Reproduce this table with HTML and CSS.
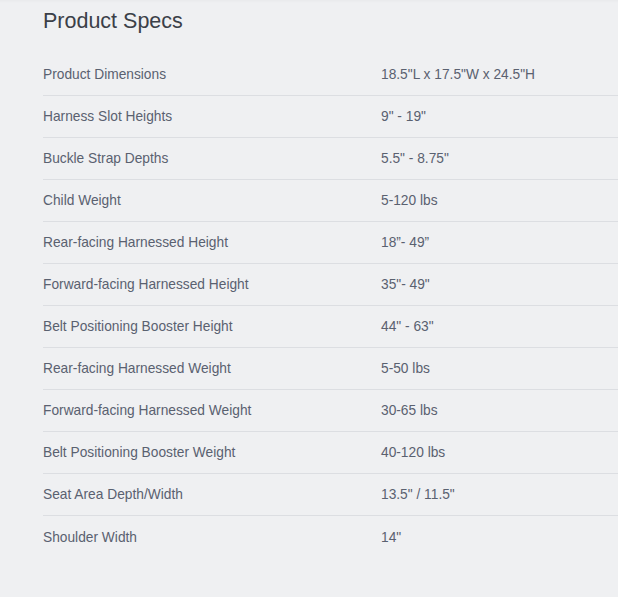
FILE: index.html
```html
<!DOCTYPE html>
<html lang="en">
<head>
<meta charset="utf-8">
<title>Product Specs</title>
<link rel="stylesheet" href="styles.css">
</head>
<body>
<section class="specs">
  <h2 class="specs-title">Product Specs</h2>
  <div class="specs-table">
    <div class="row"><div class="label">Product Dimensions</div><div class="value">18.5"L x 17.5"W x 24.5"H</div></div>
    <div class="row"><div class="label">Harness Slot Heights</div><div class="value">9" - 19"</div></div>
    <div class="row"><div class="label">Buckle Strap Depths</div><div class="value">5.5" - 8.75"</div></div>
    <div class="row"><div class="label">Child Weight</div><div class="value">5-120 lbs</div></div>
    <div class="row"><div class="label">Rear-facing Harnessed Height</div><div class="value">18”- 49”</div></div>
    <div class="row"><div class="label">Forward-facing Harnessed Height</div><div class="value">35"- 49"</div></div>
    <div class="row"><div class="label">Belt Positioning Booster Height</div><div class="value">44" - 63"</div></div>
    <div class="row"><div class="label">Rear-facing Harnessed Weight</div><div class="value">5-50 lbs</div></div>
    <div class="row"><div class="label">Forward-facing Harnessed Weight</div><div class="value">30-65 lbs</div></div>
    <div class="row"><div class="label">Belt Positioning Booster Weight</div><div class="value">40-120 lbs</div></div>
    <div class="row"><div class="label">Seat Area Depth/Width</div><div class="value">13.5" / 11.5"</div></div>
    <div class="row"><div class="label">Shoulder Width</div><div class="value">14"</div></div>
  </div>
</section>
</body>
</html>
```

FILE: styles.css
```css
html, body {
  margin: 0;
  padding: 0;
  background: #eff0f2;
  overflow: hidden;
}
body {
  font-family: "Liberation Sans", Arial, sans-serif;
  box-shadow: inset 0 3px 3px -2px rgba(0, 0, 0, 0.035);
  min-height: 597px;
}
.specs {
  padding: 7px 0 0 43px;
}
.specs-title {
  margin: 0;
  font-size: 21.5px;
  line-height: 28px;
  font-weight: 400;
  color: #3b4048;
}
.specs-table {
  margin-top: 19px;
}
.row {
  display: grid;
  grid-template-columns: 338px 1fr;
  box-sizing: border-box;
  height: 42px;
  align-items: center;
  border-bottom: 1px solid #dcdee2;
  font-size: 13.75px;
  color: #5a6170;
}
.row:last-child {
  border-bottom: none;
}
```
